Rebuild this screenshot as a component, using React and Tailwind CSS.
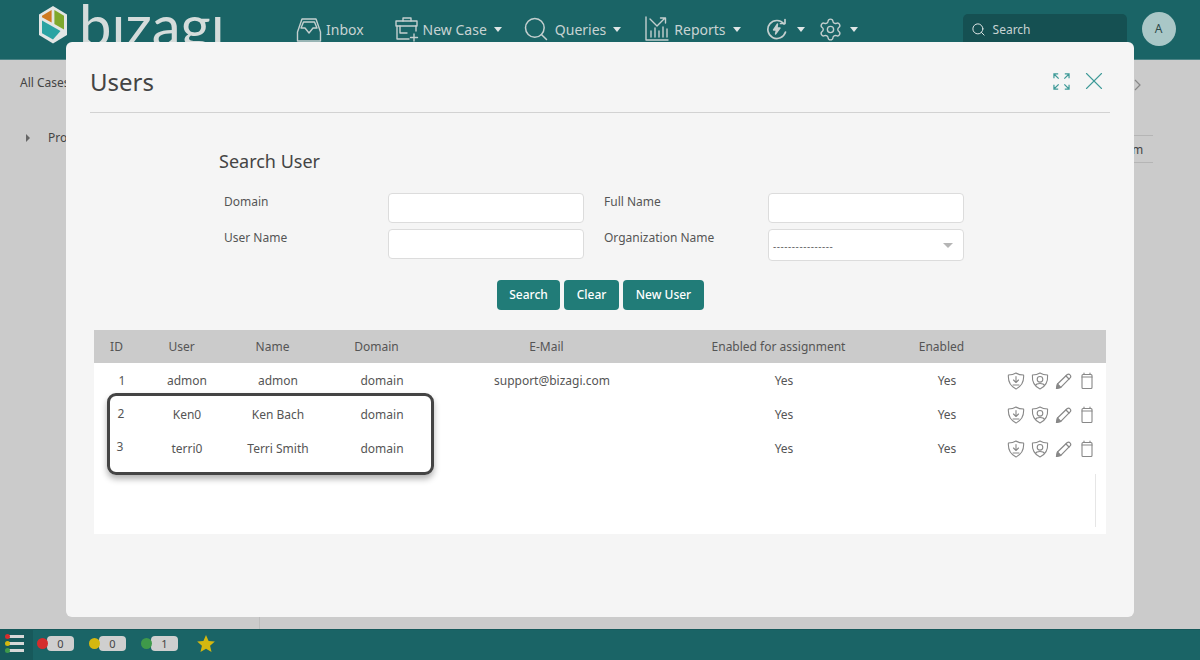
import React from "react";
import { Settings, Search, X } from "lucide-react";

const Caret = () => <span className="w-0 h-0 border-x-[4px] border-x-transparent border-t-[5px] border-t-[#dfe6e6]" />;

const Logo = () => (
  <svg width="30" height="40" viewBox="0 0 30 40" className="shrink-0">
    <path d="M15 1 L29 9.5 V30 L15 38.5 L1 30 V9.5Z" fill="#e3e6e5" />
    <path d="M13.6 5 V17.6 L4 12.2 V10.8Z" fill="#cf7a20" />
    <path d="M16.4 5 L26 10.8 V24.5 L16.4 19Z" fill="#7fa82c" />
    <path d="M4 15.5 L22.5 26 L15 34.6 L4 28.2Z" fill="#2aa3a3" />
  </svg>
);

const stroke = { fill: "none", stroke: "#c4cfcf", strokeWidth: 1.4, strokeLinejoin: "round", strokeLinecap: "round" };

const InboxIcon = () => (
  <svg width="26" height="26" viewBox="0 0 26 26" {...stroke}>
    <path d="M6 2 H20 L24.5 15 V24 H1.5 V15Z" />
    <path d="M7.5 5 H18.5 L21 11 H17 L13 16 L9 11 H5Z" />
  </svg>
);
const CaseIcon = () => (
  <svg width="24" height="26" viewBox="0 0 24 26" {...stroke}>
    <path d="M8 5 V2 H16 V5" />
    <path d="M1 5 H22 V10 H1Z" />
    <path d="M2 10 V23 H14 M21 10 V15" />
    <path d="M5 10 V17 H12" />
    <path d="M19 18 V25 M15.5 21.5 H22.5" />
  </svg>
);
const ChartIcon = () => (
  <svg width="24" height="26" viewBox="0 0 24 26" {...stroke}>
    <path d="M1 1 V24 H23" />
    <path d="M5 3 L12 10 L20 2 M15.5 2 H20.5 V7" />
    <path d="M6 21 V15 M10 21 V12 M14 21 V15 M18 21 V11 M22 21 V13" />
  </svg>
);
const BoltIcon = () => (
  <svg width="22" height="22" viewBox="0 0 22 22" {...stroke}>
    <path d="M18 6 A9 9 0 1 0 19.5 14" strokeWidth="1.7" />
    <path d="M14.5 5.5 H19 V1.5" strokeWidth="1.7" />
    <path d="M11.5 6 L7.5 12 H10.5 L9.5 16 L14 10 H11Z" fill="#c4cfcf" />
  </svg>
);

const icon = { fill: "none", stroke: "#888", strokeWidth: 1.1, strokeLinejoin: "round", strokeLinecap: "round" };
const Shield = ({ children }) => (
  <svg width="18" height="18" viewBox="0 0 18 18" {...icon}>
    <path d="M9 1 C11.5 2.6 14 3 16.6 3 C17 8.5 15.5 14 9 17 C2.500 14 1 8.500 1.400 3 C4 3 6.500 2.600 9 1Z" />
    {children}
  </svg>
);
const ShieldDown = () => (
  <Shield>
    <path d="M9 4.500 V10.500 M6.500 8 L9 10.500 L11.500 8 M6 13 H12" />
  </Shield>
);
const ShieldUser = () => (
  <Shield>
    <circle cx="9" cy="7.300" r="2.800" />
    <path d="M4.500 13.500 C5.500 10.800 12.500 10.800 13.500 13.500" />
  </Shield>
);
const PencilIcon = () => (
  <svg width="17" height="17" viewBox="0 0 17 17" {...icon} strokeWidth="1.2">
    <path d="M1.500 15.500 L2.500 11 L12 1.800 C13 1 14.200 1 15 1.900 C15.900 2.800 15.900 4 15.100 4.900 L5.800 14.300Z" />
    <path d="M1.500 15.500 L5.800 14.300 L2.500 11Z" fill="#888" />
    <path d="M11 3 L14 6" />
  </svg>
);
const Clip = () => (
  <svg width="14" height="18" viewBox="0 0 14 18" {...icon}>
    <rect x="2" y="2.500" width="10" height="14" rx="1" />
    <path d="M2 5 H12 M4 1 V2.500 M10 1 V2.500" />
  </svg>
);

const NavItem = ({ iconEl, label, caret, className = "", labelGap = "ml-[4px]", caretGap = "ml-[7px]" }) => (
  <div className={`flex items-center shrink-0 ${className}`}>
    {iconEl}
    {label && <span className={`${labelGap} text-[14px] text-[#c8d3d3]`}>{label}</span>}
    {caret && <span className={`${caretGap} flex`}><Caret /></span>}
  </div>
);

const Field = ({ label, select }) => (
  <>
    <label className="text-[12px] text-[#555] leading-[16px] pl-[5px] pt-[1px]">{label}</label>
    {select ? (
      <div className="h-[32px] bg-white border border-[#dcdcdc] rounded-[4px] flex items-center justify-between pl-[4px] pr-[10px] pt-[2px]">
        <span className="text-[10px] text-[#666] tracking-[0.55px]">----------------</span>
        <span className="w-0 h-0 border-x-[5px] border-x-transparent border-t-[5px] border-t-[#b5b5b5] mb-[2px]" />
      </div>
    ) : (
      <div className="h-[30px] bg-white border border-[#dcdcdc] rounded-[4px]" />
    )}
  </>
);

const cols = "grid grid-cols-[56px_74px_108px_100px_240px_224px_102px_108px] items-center";

const rows = [
  ["1", "admon", "admon", "domain", "support@bizagi.com", "Yes", "Yes", ""],
  ["2", "Ken0", "Ken Bach", "domain", "", "Yes", "Yes", "pr-[2px] pb-[2px]"],
  ["3", "terri0", "Terri Smith", "domain", "", "Yes", "Yes", "pr-[4px] pb-[4px]"],
];
const heads = ["ID", "User", "Name", "Domain", "E-Mail", "Enabled for assignment", "Enabled"];

const Status = ({ color, n }) => (
  <div className="flex items-center shrink-0">
    <span className="w-[11px] h-[11px] rounded-full z-10" style={{ background: color }} />
    <span className="w-[27px] h-[15px] -ml-[1px] rounded-[4px] bg-[#cfcfcf] text-[11px] leading-[15px] text-center text-[#444]">{n}</span>
  </div>
);

export default function App() {
  return (
    <div className="relative w-[1200px] h-[660px] overflow-hidden flex flex-col bg-[#cbcbcb] font-['Noto_Sans',sans-serif]">
      <header className="h-[60px] shrink-0 bg-[#1a6466] flex items-start pl-[38px] border-b border-[#c4cfcf]/30">
        <div className="flex items-center h-[48px] pt-[2px] w-[258px] shrink-0">
          <Logo />
          <span className="ml-[11px] text-[58px] leading-[48px] font-['Lato',sans-serif] font-normal text-[#d5dcdb]">bızagı</span>
        </div>
        <div className="flex items-center h-[60px] -mt-[1px]">
          <NavItem iconEl={<InboxIcon />} label="Inbox" className="mt-[1px]" />
          <NavItem iconEl={<CaseIcon />} label="New Case" caret className="ml-[31px]" />
          <NavItem iconEl={<Search size={28} strokeWidth={1.3} color="#c4cfcf" />} label="Queries" caret labelGap="ml-[5px]" className="ml-[20px]" />
          <NavItem iconEl={<ChartIcon />} label="Reports" caret labelGap="ml-[5px]" className="ml-[24px]" />
          <NavItem iconEl={<BoltIcon />} caret caretGap="ml-[9px]" className="ml-[25px]" />
          <NavItem iconEl={<Settings size={25} strokeWidth={1.3} color="#c4cfcf" />} caret className="ml-[13px]" />
        </div>
        <div className="ml-[105px] mt-[14px] w-[164px] h-[34px] bg-[#155052] rounded-[5px] flex items-start pt-[8px] pl-[8px] shrink-0">
          <Search size={15} strokeWidth={1.6} color="#dfe6e6" />
          <span className="ml-[7px] text-[12px] leading-[16px] text-[#c8d3d3]">Search</span>
        </div>
        <div className="ml-[15px] mt-[12px] w-[34px] h-[34px] rounded-full bg-[#a9c7c7] flex items-center justify-center text-[12px] text-[#2d4a4a] shrink-0">A</div>
      </header>

      <main className="flex-1 relative flex">
        <div className="w-[260px] border-r border-[#bdbdbd] shrink-0 flex flex-col">
          <div className="pl-[20px] pt-[14px] text-[12px] leading-[18px] text-[#444]">All Cases</div>
          <div className="mt-[37px] pl-[26px] flex items-center text-[12px] leading-[18px] text-[#444]">
            <span className="w-0 h-0 border-y-[4px] border-y-transparent border-l-[4px] border-l-[#666]" />
            <span className="ml-[18px]">Process</span>
          </div>
        </div>
        <div className="flex-1 flex justify-end pr-[47px] pt-[75px]">
          <div className="w-[19px] h-[28px] border-y border-[#b5b5b5] text-[12px] text-[#444] leading-[28px] text-left overflow-hidden -indent-[2px]">m</div>
        </div>
      </main>

      <footer className="h-[31px] shrink-0 bg-[#1a6466] flex items-center border-t border-[#17595b]">
        <div className="w-[33px] h-full bg-[#17595b] flex flex-col justify-center gap-[2px] pl-[5px] pb-[4px]">
          {["#d42d2d", "#d4b80f", "#3f9a4a"].map((c) => (
            <div key={c} className="flex items-center">
              <span className="w-[5px] h-[5px] rounded-full -mr-[1px] z-10" style={{ background: c }} />
              <span className="w-[15px] h-[3px] bg-[#d8d8d8]" />
            </div>
          ))}
        </div>
        <div className="ml-[4px] flex items-center gap-[15px] pb-[4px]">
          <Status color="#d42d2d" n="0" />
          <Status color="#d4b80f" n="0" />
          <Status color="#3f9a4a" n="1" />
        </div>
        <svg width="18" height="17" viewBox="0 0 24 23" className="ml-[19px] mb-[4px]">
          <path d="M12 0 L15.500 8 L24 8.800 L17.500 14.500 L19.500 23 L12 18.500 L4.500 23 L6.500 14.500 L0 8.800 L8.500 8Z" fill="#d4b80f" />
        </svg>
      </footer>

      {/* partly hidden chevron behind the dialog */}
      <svg width="8" height="12" viewBox="0 0 8 12" className="absolute left-[1133px] top-[79px]" fill="none" stroke="#888" strokeWidth="1.200">
        <path d="M2 1 L7 6 L2 11" />
      </svg>

      {/* dialog */}
      <div className="absolute left-[66px] top-[42px] w-[1068px] h-[575px] bg-[#f5f5f5] rounded-[6px] flex flex-col">
        <div className="mx-[24px] h-[71px] shrink-0 border-b border-[#d2d2d2] flex items-center justify-between pt-[9px]">
          <h1 className="text-[24px] text-[#444] leading-[32px]">Users</h1>
          <div className="flex items-center gap-[9px] -mt-[1px] mr-[1px]">
            <svg width="17" height="17" viewBox="0 0 18 18" fill="none" stroke="#3f9a98" strokeWidth="1.300">
              <path d="M1 5.500 V1 H5.500 M1 1 L6 6 M17 5.500 V1 H12.500 M17 1 L12 6 M1 12.500 V17 H5.500 M1 17 L6 12 M17 12.500 V17 H12.500 M17 17 L12 12" />
            </svg>
            <X size={30} strokeWidth={0.9} color="#3f9a98" />
          </div>
        </div>

        <h2 className="ml-[153px] mt-[35px] text-[18px] leading-[26px] text-[#444]">Search User</h2>

        <div className="ml-[153px] mt-[19px] w-[745px] grid grid-cols-[169px_196px_184px_196px] gap-y-[6px] items-start">
          <div className="contents"><Field label="Domain" /></div>
          <div className="contents [&>label]:pl-[20px]"><Field label="Full Name" /></div>
          <div className="contents"><Field label="User Name" /></div>
          <div className="contents [&>label]:pl-[20px]"><Field label="Organization Name" select /></div>
        </div>

        <div className="mt-[19px] ml-[431px] flex gap-[4px]">
          {[["Search", "w-[63px]"], ["Clear", "w-[55px]"], ["New User", "w-[81px]"]].map(([t, w]) => (
            <button key={t} className={`${w} h-[30px] rounded-[4px] bg-[#217c78] text-white text-[12px] font-medium`}>{t}</button>
          ))}
        </div>

        <div className="mt-[20px] mx-[28px] h-[204px] bg-white flex flex-col relative">
          <div className={`${cols} h-[33px] shrink-0 bg-[#cbcbcb] text-[12px] text-[#555]`}>
            {heads.map((h) => <div key={h} className="text-center pr-[11px]">{h}</div>)}
          </div>
          {rows.map((r) => (
            <div key={r[0]} className={`${cols} h-[34px] shrink-0 pt-[2px] text-[12px] text-[#555]`}>
              <div className={`text-center ${r[7]}`}>{r[0]}</div>
              {r.slice(1, 7).map((c, i) => <div key={i} className="text-center">{c}</div>)}
              <div className="flex items-center gap-[6px] pl-[9px]">
                <ShieldDown /><ShieldUser />
                <PencilIcon />
                <span className="ml-[2px] flex"><Clip /></span>
              </div>
            </div>
          ))}
          <div className="flex-1 flex justify-end pr-[10px] pt-[9px] pb-[7px]">
            <div className="w-px bg-[#e6e6e6]" />
          </div>

          {/* callout drawn over the rows */}
          <div className="absolute left-[13px] top-[63px] w-[327px] h-[82px] border-[3px] border-[#444] rounded-[9px] shadow-[0_4px_6px_rgba(0,0,0,0.3)]" />
        </div>
      </div>
    </div>
  );
}
